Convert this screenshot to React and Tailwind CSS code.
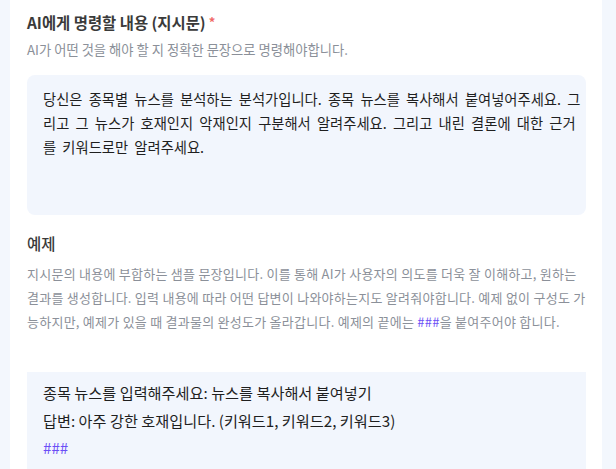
export default function App() {
  const font = { fontFamily: '"Noto Sans CJK KR", "Noto Sans", sans-serif' };
  return (
    <div className="min-h-screen w-full bg-[#f3f7fd] pl-[10px] overflow-hidden" style={font}>
      <div className="w-[592px] bg-white pl-[17px] pr-[16px] pt-[11px] min-h-[469px]">
        <div className="flex items-center text-[15.4px] leading-[22px] font-bold text-[#3a3a3a]">
          AI에게 명령할 내용 (지시문)
          <span className="ml-[3px] text-[#f06868] text-[13px] font-bold">*</span>
        </div>
        <div className="mt-[7px] text-[13.3px] leading-[20px] text-[#8b9099]">
          AI가 어떤 것을 해야 할 지 정확한 문장으로 명령해야합니다.
        </div>
        <div className="mt-[15px] h-[140px] rounded-[8px] bg-[#f2f6fd] pl-[16px] pr-[1px] pt-[12px] text-[14.3px] leading-[24px] [word-spacing:3px] text-[#1f1f1f]">
          당신은 종목별 뉴스를 분석하는 분석가입니다. 종목 뉴스를 복사해서 붙여넣어주세요. 그리고 그 뉴스가 호재인지 악재인지 구분해서 알려주세요. 그리고 내린 결론에 대한 근거를 키워드로만 알려주세요.
        </div>
        <div className="mt-[17px] text-[15.5px] leading-[22px] font-medium text-[#3a3a3a]">예제</div>
        <div className="mt-[8px] mr-[-2px] text-[13px] leading-[24px] tracking-[0.25px] text-[#8b9099]">
          지시문의 내용에 부합하는 샘플 문장입니다. 이를 통해 AI가 사용자의 의도를 더욱 잘 이해하고, 원하는 결과를 생성합니다. 입력 내용에 따라 어떤 답변이 나와야하는지도 알려줘야합니다. 예제 없이 구성도 가능하지만, 예제가 있을 때 결과물의 완성도가 올라갑니다. 예제의 끝에는{' '}
          <span className="text-[#6b4ef6]">###</span>을 붙여주어야 합니다.
        </div>
        <div className="mt-[38px] h-[120px] bg-[#f2f6fd] pl-[16px] pt-[7px] text-[15.2px] leading-[27.5px] text-[#1f1f1f]">
          <div>종목 뉴스를 입력해주세요: 뉴스를 복사해서 붙여넣기</div>
          <div>답변: 아주 강한 호재입니다. (키워드1, 키워드2, 키워드3)</div>
          <div className="text-[#6b4ef6]">###</div>
        </div>
      </div>
    </div>
  );
}
